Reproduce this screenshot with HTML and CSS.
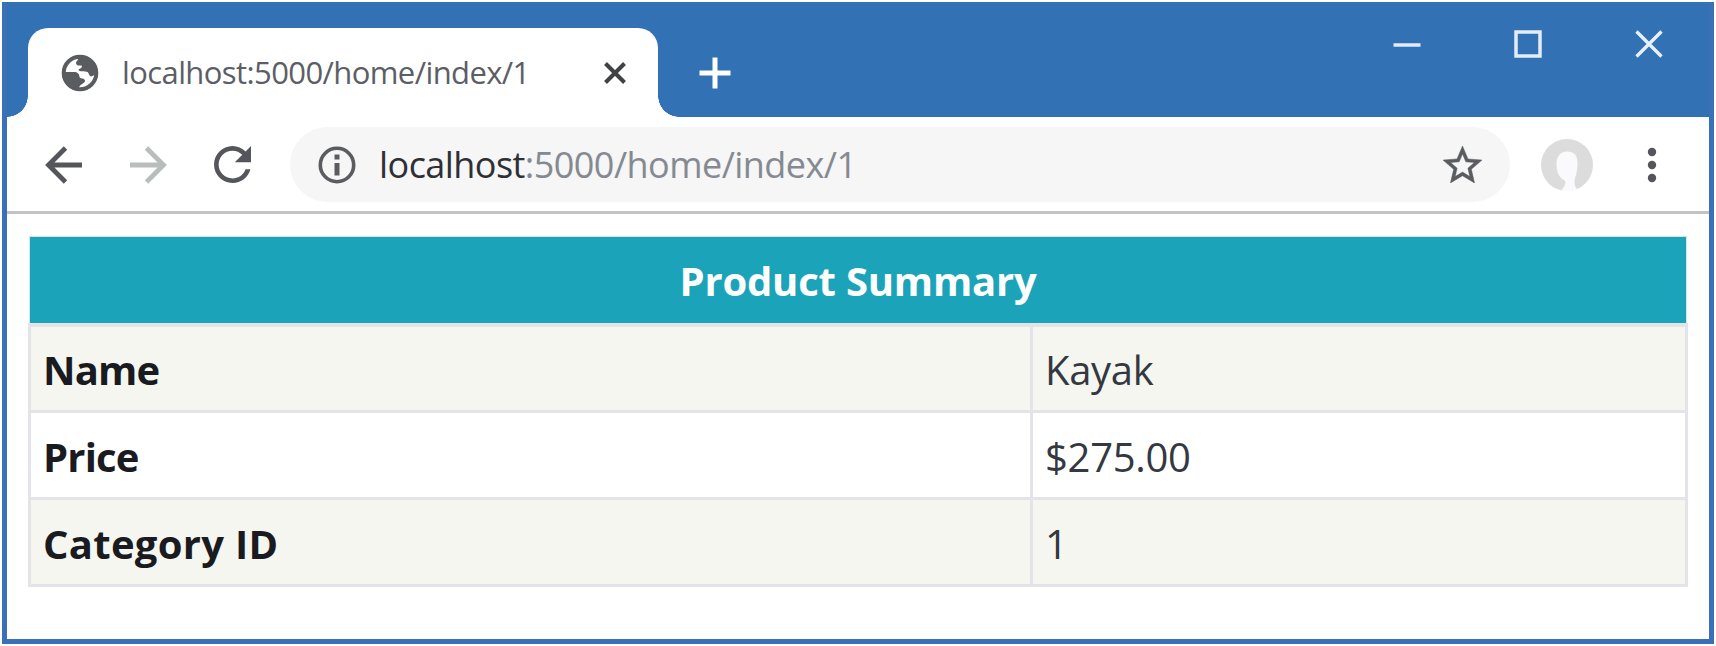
FILE: index.html
```html
<!DOCTYPE html>
<html lang="en">
<head>
<meta charset="utf-8">
<title>localhost:5000/home/index/1</title>
<link rel="stylesheet" href="styles.css">
</head>
<body>
<div class="window">
  <header class="titlebar">
    <div class="tab">
      <svg class="globe" viewBox="0 0 38 38"><circle cx="19" cy="19" r="16.3" fill="#fff" stroke="#5a5c60" stroke-width="4"/><path d="M18 2L16.500 6.500C14.500 8 14.500 10.500 17 11.500H20.500C22 13 19.500 14.500 17.500 15.500C18 18.500 24 17 26.500 18C28 19 28 22 30 22.500C32 22.500 34 20 36 19C36 9 28 1 18 2Z" fill="#5a5c60"/><path d="M2 18H13C16.500 18 18.500 20 18.500 23C19 25 23 23.500 24 26.500C24.500 29.500 19 29 17.500 35C8 34 2 27 2 18Z" fill="#5a5c60"/></svg>
      <span class="tab-title">localhost:5000/home/index/1</span>
      <svg class="tab-close" viewBox="0 0 24 24"><path d="M2.500 2.500L21.500 21.500M21.500 2.500L2.500 21.500" stroke="#404246" stroke-width="4"/></svg>
    </div>
    <svg class="new-tab" viewBox="0 0 32 32"><path d="M16 .5V31.500M.5 16H31.500" stroke="#fff" stroke-width="5"/></svg>
    <div class="controls">
      <svg viewBox="0 0 28 28"><path d="M.5 15H27.500" stroke="#e2ebf7" stroke-width="3.500"/></svg>
      <svg viewBox="0 0 28 28"><path d="M2 2H26V26H2Z" fill="none" stroke="#e2ebf7" stroke-width="3.500"/></svg>
      <svg viewBox="0 0 28 28"><path d="M1.500 1.500L26.500 26.500M26.500 1.500L1.500 26.500" stroke="#e9f0f9" stroke-width="3.300"/></svg>
    </div>
  </header>
  <nav class="toolbar">
    <svg class="arrow" viewBox="0 0 38 38"><path d="M37 19H3M20.500 2L3.500 19L20.500 36" fill="none" stroke="#54565b" stroke-width="4.800"/></svg>
    <svg class="arrow" viewBox="0 0 38 38"><path d="M1 19H35M17.500 2L34.500 19L17.500 36" fill="none" stroke="#b9bdbb" stroke-width="4.800"/></svg>
    <svg class="reload" viewBox="4 4 16 16"><path fill="#54565b" d="M17.650 6.350C16.200 4.900 14.210 4 12 4c-4.420 0-7.990 3.580-7.990 8s3.570 8 7.990 8c3.730 0 6.840-2.550 7.730-6h-2.080c-.82 2.330-3.040 4-5.650 4-3.310 0-6-2.690-6-6s2.690-6 6-6c1.660 0 3.140.69 4.220 1.780L13 11h7V4l-2.350 2.350z"/></svg>
    <div class="address">
      <svg class="info" viewBox="0 0 38 38"><circle cx="19" cy="19" r="16.700" fill="none" stroke="#5a5c60" stroke-width="3.600"/><path d="M19 8.500V13.500M19 17V29.500" stroke="#5a5c60" stroke-width="5"/></svg>
      <span class="url"><b>localhost</b>:5000/home/index/1</span>
      <svg class="star" viewBox="2 2 20 19"><path fill="#5a5c60" stroke="#5a5c60" stroke-width=".25" d="M22 9.240l-7.190-.62L12 2 9.190 8.630 2 9.240l5.460 4.730L5.820 21 12 17.270 18.180 21l-1.630-7.030L22 9.240zM12 15.400l-3.760 2.270 1-4.280-3.320-2.880 4.380-.38L12 6.100l1.710 4.040 4.380.38-3.320 2.880 1 4.280L12 15.400z"/></svg>
    </div>
    <svg class="avatar" viewBox="0 0 52 52"><circle cx="26" cy="26" r="26" fill="#dcdcdd"/><path d="M26 12.500C19 12.500 15.500 18 15.500 25C15.500 33 18 39 24 41.500C25 45 24 47 20 51.500C24 52.500 31 52.500 36 50.500C33.500 47 33 43 34 39C36 34 36.500 28 36.500 24C36.500 16 33 12.500 26 12.500Z" fill="#fafafc"/></svg>
    <svg class="menu" viewBox="0 0 10 36"><circle cx="5" cy="5" r="4.200" fill="#54565b"/><circle cx="5" cy="18" r="4.200" fill="#54565b"/><circle cx="5" cy="31" r="4.200" fill="#54565b"/></svg>
  </nav>
  <main class="page">
    <table class="summary">
      <colgroup><col class="label-col"><col></colgroup>
      <thead><tr><th colspan="2"><span class="heading">Product Summary</span></th></tr></thead>
      <tbody>
        <tr><th><span class="short">Name</span></th><td>Kayak</td></tr>
        <tr><th><span class="short">Price</span></th><td>$275.00</td></tr>
        <tr><th><span class="long">Category ID</span></th><td>1</td></tr>
      </tbody>
    </table>
  </main>
</div>
</body>
</html>
```
FILE: styles.css
```css
* { box-sizing: border-box; }
body { margin: 0; padding: 2px; background: #fff; font-family: "Open Sans", "Noto Sans", sans-serif; overflow: hidden; }
svg { display: block; flex: none; }
.window { width: 1712px; height: 642px; border: 5px solid #3a70b7; border-top: 0; background: #fff; display: flex; flex-direction: column; }
.titlebar { height: 115px; background: #3171b4; display: flex; align-items: flex-end; padding-left: 21px; flex: none; }
.tab { position: relative; width: 630px; height: 89px; background: #fff; border-radius: 20px 20px 0 0; display: flex; align-items: center; padding-left: 33px; }
.tab::before, .tab::after { content: ""; position: absolute; bottom: 0; width: 21px; height: 21px; }
.tab::before { left: -21px; background: radial-gradient(circle at 0 0, transparent 20.500px, #fff 21px); }
.tab::after { right: -21px; background: radial-gradient(circle at 100% 0, transparent 20.500px, #fff 21px); }
.globe { width: 38px; height: 38px; }
.tab-title { width: 494px; padding: 0 0 2px 23px; font-size: 31px; line-height: 44px; letter-spacing: -0.6px; color: #5c5e66; white-space: nowrap; }
.tab-close { width: 24px; height: 24px; margin-left: 10px; }
.new-tab { width: 32px; height: 32px; margin: 0 0 28px 41px; }
.controls { display: flex; gap: 93px; margin: 0 46px 59px auto; }
.controls svg { width: 28px; height: 28px; }
.toolbar { height: 97px; border-bottom: 3px solid #c3c3c3; display: flex; align-items: center; padding: 1px 0 0 38px; flex: none; }
.arrow { width: 38px; height: 38px; margin-right: 46px; }
.reload { width: 37px; height: 37px; margin-left: 1px; }
.address { width: 1220px; height: 75px; margin-left: 39px; padding: 0 28px; border-radius: 38px; background: #f5f6f5; display: flex; align-items: center; }
.info { width: 38px; height: 38px; }
.url { flex: 1; padding: 1px 0 0 23px; font-size: 36px; line-height: 50px; letter-spacing: -0.55px; color: #858a92; white-space: nowrap; }
.url b { font-weight: 400; color: #2e3036; }
.star { width: 39px; height: 37px; }
.avatar { width: 52px; height: 52px; margin-left: 31px; }
.menu { width: 10px; height: 36px; margin-left: 54px; }
.page { padding: 22px 21px 0; }
.summary { width: 1660px; table-layout: fixed; border-collapse: collapse; color: #343840; font-size: 40px; line-height: 50px; }
.label-col { width: 1002px; }
.summary th, .summary td { height: 87px; padding: 4px 12px 0; border: 3px solid #e3e3e9; text-align: left; font-weight: 400; }
.summary td { letter-spacing: -0.3px; }
.summary th { font-weight: 700; color: #191b21; }
.summary thead th { height: 88px; padding-top: 2px; text-align: center; color: #fff; background: #1ba4b9; border: 1px solid #d4e5e9; border-bottom: 4px solid #e3e3e8; }
.summary tbody tr:nth-child(odd) { background: #f6f6f0; }
.heading { letter-spacing: -0.2px; }
.short { letter-spacing: -0.8px; }
.long { letter-spacing: 0.3px; }
```
